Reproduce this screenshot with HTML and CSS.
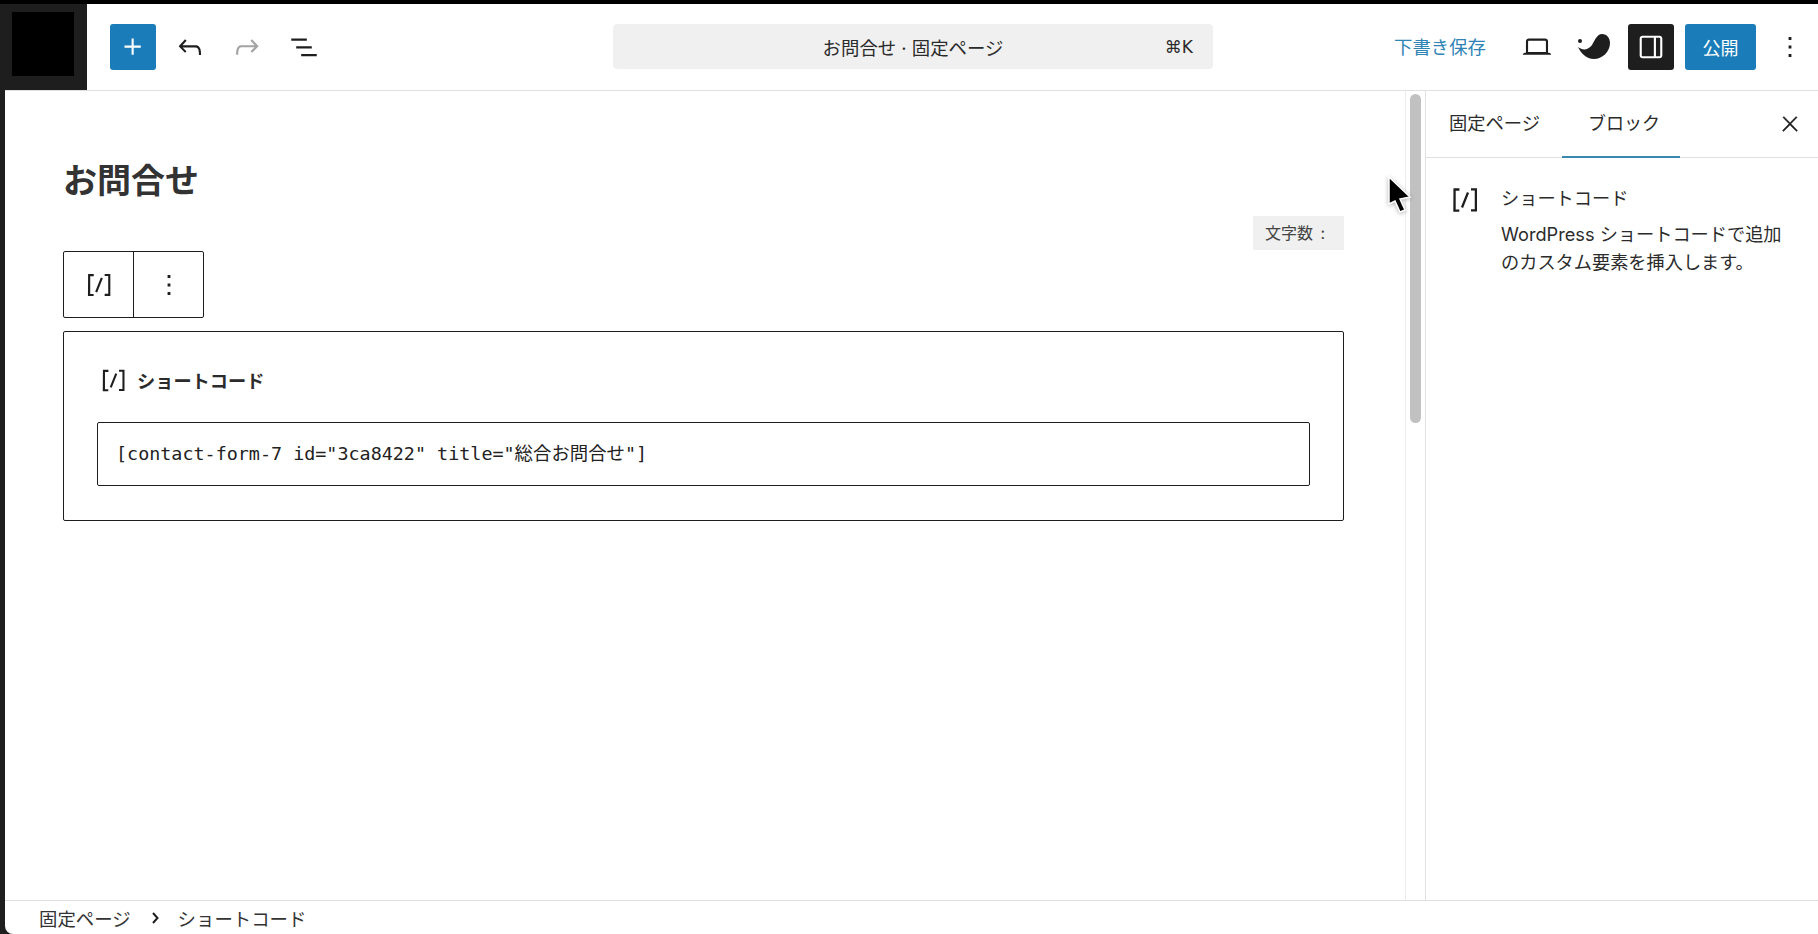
FILE: index.html
```html
<!DOCTYPE html>
<html lang="ja">
<head>
<meta charset="utf-8">
<title>お問合せ</title>
<link rel="stylesheet" href="styles.css">
</head>
<body>
<div class="window">
  <header class="topbar">
    <div class="logo"><div class="logo-mark"></div></div>
    <div class="tools">
      <button class="btn primary"><svg class="ico" viewBox="0 0 24 24"><path d="M11 12.5V17.5H12.5V12.5H17.5V11H12.5V6H11V11H6V12.5H11Z"/></svg></button>
      <button class="btn"><svg class="ico" viewBox="0 0 24 24"><path d="M18.3 11.7c-.6-.6-1.4-.9-2.3-.9H6.7l2.9-3.3-1.1-1-4.5 5L8.5 16l1-1-2.7-2.7H16c.5 0 .9.2 1.3.5 1 1 1 3.4 1 4.5v.3h1.5v-.2c0-1.5 0-4.3-1.5-5.7z"/></svg></button>
      <button class="btn muted"><svg class="ico" viewBox="0 0 24 24"><path d="M15.6 6.5l-1.1 1 2.9 3.3H8c-.9 0-1.7.3-2.3.9-1.4 1.5-1.4 4.2-1.4 5.6v.2h1.5v-.3c0-1.1 0-3.5 1-4.5.3-.3.7-.5 1.3-.5h9.2L14.5 15l1.1 1.1 4.6-4.6-4.6-5z"/></svg></button>
      <button class="btn"><svg class="ico" viewBox="0 0 24 24"><path d="M3 6h11v1.5H3V6Zm3.5 5.5h11V13h-11v-1.5ZM21 17H10v1.5h11V17Z"/></svg></button>
    </div>
    <div class="command">
      <span class="command-title">お問合せ · 固定ページ</span>
      <span class="command-key">⌘K</span>
    </div>
    <div class="actions">
      <span class="save">下書き保存</span>
      <button class="btn"><svg class="ico" viewBox="0 0 24 24"><path d="M20.5 16h-.7V8c0-1.1-.9-2-2-2H6.2c-1.1 0-2 .9-2 2v8h-.7c-.8 0-1.5.7-1.5 1.5h20c0-.8-.7-1.5-1.5-1.5zM5.7 8c0-.3.2-.5.5-.5h11.6c.3 0 .5.2.5.5v7.6H5.7V8z"/></svg></button>
      <button class="btn"><svg class="leaf" viewBox="0 0 33 26"><circle cx="2" cy="7" r="2"/><path d="M0 13C5 17 10 16 14 11C17 6 19 0 24 0C29 0 32 4 32 9C32 18 24 25 16 25C8 25 3 19 0 13Z"/></svg></button>
      <button class="btn dark"><svg class="ico" viewBox="0 0 24 24"><path d="M18 4H6c-1.1 0-2 .9-2 2v12c0 1.100.9 2 2 2h12c1.100 0 2-.9 2-2V6c0-1.100-.9-2-2-2zm-4 14.500H6c-.3 0-.5-.2-.5-.5V6c0-.3.2-.5.5-.5h8v13zm4.500-.5c0 .3-.2.5-.5.5h-2.500v-13H18c.3 0 .5.2.5.5v12z"/></svg></button>
      <button class="publish">公開</button>
      <button class="btn"><svg class="ico" viewBox="0 0 24 24"><path d="M13 19h-2v-2h2v2zm0-6h-2v-2h2v2zm0-6h-2V5h2v2z"/></svg></button>
    </div>
  </header>

  <div class="main">
    <main class="canvas">
      <h1 class="title">お問合せ</h1>
      <div class="count-row"><span class="count">文字数 :</span></div>
      <div class="block-toolbar">
        <div class="cell"><svg class="ico-sm" viewBox="0 0 24 24"><path d="M16 4.200v1.500h2.500v12.500H16v1.500h4V4.200h-4zM4.200 19.800h4v-1.500H5.800V5.800h2.500V4.200h-4l-.1 15.600zm5.100-3.100l1.400.6 4-10-1.400-.6-4 10z"/></svg></div>
        <div class="cell"><svg class="ico-sm" viewBox="0 0 24 24"><path d="M13 19h-2v-2h2v2zm0-6h-2v-2h2v2zm0-6h-2V5h2v2z"/></svg></div>
      </div>
      <section class="block">
        <div class="block-label"><svg class="ico-label" viewBox="0 0 24 24"><path d="M16 4.200v1.500h2.500v12.500H16v1.500h4V4.200h-4zM4.200 19.800h4v-1.500H5.800V5.800h2.500V4.200h-4l-.1 15.600zm5.100-3.100l1.400.6 4-10-1.400-.6-4 10z"/></svg><span>ショートコード</span></div>
        <div class="code">[contact-form-7 id="3ca8422" title="総合お問合せ"]</div>
      </section>
      <svg class="cursor" viewBox="0 0 26 40"><path d="M2 2L23 22L13 24L18 35L13 37L8 26L2 29Z"/></svg>
    </main>
    <div class="scroll"><div class="thumb"></div></div>
    <aside class="sidebar">
      <div class="tabs">
        <span class="tab">固定ページ</span>
        <span class="tab active">ブロック</span>
        <svg class="close" viewBox="0 0 24 24"><path d="M13 11.800l6.100-6.300-1-1-6.100 6.200-6.100-6.200-1 1 6.100 6.300-6.500 6.700 1 1 6.500-6.600 6.500 6.600 1-1z"/></svg>
      </div>
      <div class="info">
        <svg class="info-icon" viewBox="0 0 24 24"><path d="M16 4.200v1.500h2.500v12.500H16v1.500h4V4.200h-4zM4.200 19.800h4v-1.500H5.800V5.800h2.500V4.200h-4l-.1 15.600zm5.100-3.100l1.400.6 4-10-1.400-.6-4 10z"/></svg>
        <div>
          <div class="info-title">ショートコード</div>
          <p class="info-desc">WordPress ショートコードで追加のカスタム要素を挿入します。</p>
        </div>
      </div>
    </aside>
  </div>

  <footer class="crumbs">
    <span>固定ページ</span>
    <svg class="chev" viewBox="0 0 10 14"><path d="M3 2L7.500 7L3 12"/></svg>
    <span>ショートコード</span>
  </footer>
</div>
</body>
</html>
```
FILE: styles.css
```css
* { box-sizing: border-box; }
html, body { margin: 0; height: 100%; overflow: hidden; }
body {
  background: #1e1e1e;
  border-top: 4px solid #000;
  padding-left: 5px;
  font-family: Inter, "Noto Sans CJK JP", sans-serif;
  color: #2b2b2b;
}
.window {
  height: 930px;
  background: #fff;
  display: flex;
  flex-direction: column;
  border-bottom-left-radius: 8px;
  overflow: hidden;
}
button { border: 0; background: none; padding: 0; font: inherit; }

.topbar {
  height: 87px;
  flex: none;
  display: flex;
  border-bottom: 1px solid #e0e0e0;
}
.logo {
  width: 82px;
  background: #1e1e1e;
  padding: 8px 0 0 7px;
}
.logo-mark { width: 62px; height: 64px; background: #000; }
.tools {
  width: 526px;
  padding: 20px 0 0 23px;
  display: flex;
  gap: 11px;
  align-items: flex-start;
}
.btn {
  width: 46px;
  height: 46px;
  flex: none;
  display: flex;
  align-items: center;
  justify-content: center;
  border-radius: 3px;
  fill: #1e1e1e;
}
.ico { width: 34px; height: 34px; display: block; }
.primary { background: #1a7cb8; fill: #fff; }
.muted { fill: #a3a3a3; }
.dark { background: #1e1e1e; fill: #fff; }
.leaf { width: 33px; height: 26px; display: block; }

.command {
  width: 600px;
  height: 45px;
  margin-top: 20px;
  background: #f0f0f0;
  border-radius: 4px;
  position: relative;
  display: flex;
  align-items: center;
  justify-content: center;
  font-size: 18.4px;
}
.command-key {
  position: absolute;
  right: 20px;
  font-size: 17px;
  font-family: "DejaVu Sans", sans-serif;
}
.actions {
  flex: 1;
  display: flex;
  justify-content: flex-end;
  align-items: flex-start;
  gap: 11px;
  padding: 20px 5px 0 0;
}
.save {
  color: #2f84b5;
  font-size: 18.4px;
  line-height: 46px;
  margin-right: 17px;
}
.publish {
  width: 71px;
  height: 46px;
  background: #1a7cb8;
  color: #fff;
  font-size: 18px;
  border-radius: 3px;
}

.main { flex: 1; display: flex; min-height: 0; }
.canvas {
  flex: 1;
  position: relative;
  padding: 64px 61px 0 58px;
}
.title {
  margin: 0;
  font-size: 34px;
  font-weight: 700;
  line-height: 52px;
  color: #333;
}
.count-row { display: flex; justify-content: flex-end; margin-top: 9px; }
.count {
  width: 91px;
  height: 34px;
  background: #f0f0f0;
  font-size: 16px;
  line-height: 34px;
  padding-left: 12px;
  color: #444;
  word-spacing: 3px;
}
.block-toolbar {
  width: 141px;
  height: 67px;
  margin-top: 1px;
  display: flex;
  border: 1px solid #1e1e1e;
  border-radius: 2px;
  background: #fff;
}
.cell {
  flex: 1;
  display: flex;
  align-items: center;
  justify-content: center;
  fill: #1e1e1e;
}
.cell + .cell { border-left: 1px solid #1e1e1e; }
.ico-sm { width: 34px; height: 34px; display: block; }
.block {
  margin-top: 13px;
  height: 190px;
  border: 1px solid #1e1e1e;
  border-radius: 2px;
  padding: 34px 33px 0 33px;
}
.block-label {
  display: flex;
  align-items: center;
  gap: 7px;
  height: 28px;
  font-size: 18.2px;
  font-weight: 700;
  fill: #1e1e1e;
}
.ico-label { width: 33px; height: 33px; display: block; }
.code {
  margin-top: 28px;
  height: 64px;
  border: 1px solid #1e1e1e;
  border-radius: 2px;
  padding-left: 18px;
  font-family: "DejaVu Sans Mono", "Noto Sans CJK JP", monospace;
  font-size: 18.4px;
  line-height: 62px;
  color: #222;
}
.cursor {
  position: absolute;
  left: 1382px;
  top: 84px;
  width: 26px;
  height: 40px;
  fill: #000;
  stroke: #fff;
  stroke-width: 1.5;
  filter: drop-shadow(0 1px 2px rgba(0, 0, 0, .3));
}

.scroll {
  width: 20px;
  flex: none;
  border-left: 1px solid #ececec;
  padding: 3px 0 0 4px;
}
.thumb { width: 11px; height: 329px; background: #c1c1c1; border-radius: 6px; }

.sidebar {
  width: 393px;
  flex: none;
  border-left: 1px solid #e0e0e0;
}
.tabs {
  height: 67px;
  display: flex;
  position: relative;
  border-bottom: 1px solid #e0e0e0;
  font-size: 18.3px;
  padding-left: 23px;
}
.tab { line-height: 65px; white-space: nowrap; }
.tab.active { margin-left: 22px; padding: 0 26px; width: 118px; position: relative; font-size: 18px; }
.tab.active::after {
  content: "";
  position: absolute;
  left: 0;
  right: 0;
  bottom: -1px;
  height: 2px;
  background: #3a87ad;
}
.close { position: absolute; left: 352px; top: 21px; width: 24px; height: 24px; fill: #1e1e1e; stroke: #1e1e1e; stroke-width: .4; }
.info { display: flex; padding: 26px 28px 0 21px; gap: 18px; }
.info-icon { width: 36px; height: 36px; flex: none; fill: #1e1e1e; margin-top: -2px; }
.info-title { font-size: 18.2px; line-height: 30px; margin-top: -1px; }
.info-desc { margin: 7px 0 0; font-size: 18.2px; line-height: 28px; }

.crumbs {
  height: 34px;
  flex: none;
  border-top: 1px solid #e0e0e0;
  display: flex;
  align-items: center;
  padding-left: 34px;
  font-size: 18.4px;
  color: #333;
}
.chev { width: 10px; height: 14px; margin: 0 18px 0 19px; fill: none; stroke: #1e1e1e; stroke-width: 2; }
```
